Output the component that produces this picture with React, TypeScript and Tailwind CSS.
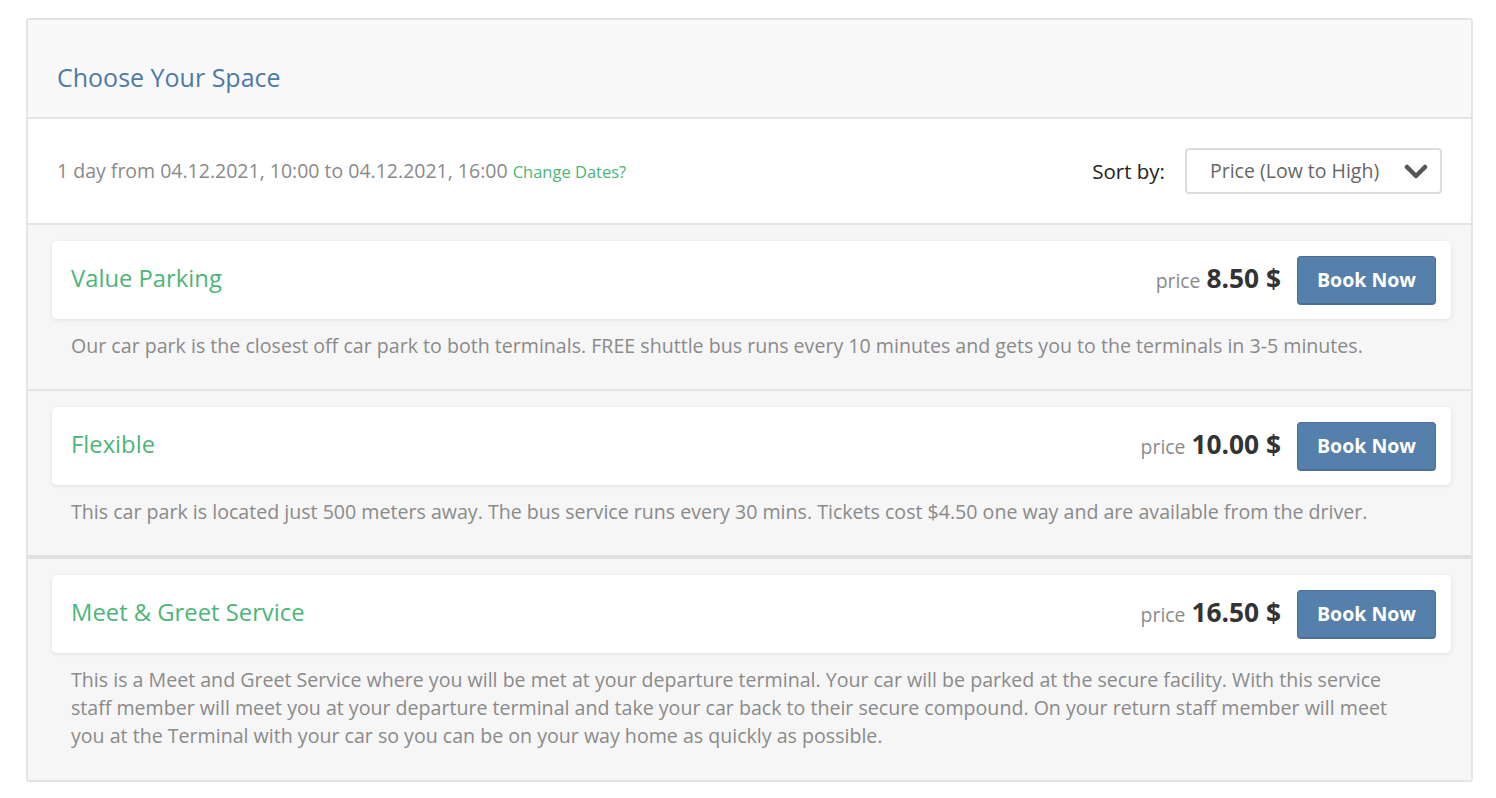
const items = [
  {
    title: 'Value Parking',
    price: '8.50 $',
    text: 'Our car park is the closest off car park to both terminals. FREE shuttle bus runs every 10 minutes and gets you to the terminals in 3-5 minutes.',
  },
  {
    title: 'Flexible',
    price: '10.00 $',
    text: 'This car park is located just 500 meters away. The bus service runs every 30 mins. Tickets cost $4.50 one way and are available from the driver.',
  },
  {
    title: 'Meet & Greet Service',
    price: '16.50 $',
    text: 'This is a Meet and Greet Service where you will be met at your departure terminal. Your car will be parked at the secure facility. With this service staff member will meet you at your departure terminal and take your car back to their secure compound. On your return staff member will meet you at the Terminal with your car so you can be on your way home as quickly as possible.',
  },
];

export default function App() {
  return (
    <div className="min-h-screen bg-white pt-[18px] pl-[26px] pr-[23px] font-['Open_Sans',sans-serif]">
      <div className="border-2 border-[#e4e4e4] rounded-[3px] overflow-hidden">

        {/* ── Header ───────────────────────────────────────────── */}
        <div className="bg-[#f9f9f9] border-b-2 border-[#e4e4e4] pl-[29px] pt-[39px] pb-[22px]">
          <h1 className="text-[25px] leading-[36px] text-[#4f79a7]">Choose Your Space</h1>
        </div>

        {/* ── Dates / sort row ─────────────────────────────────── */}
        <div className="bg-white border-b-2 border-[#e4e4e4] h-[106px] flex items-center justify-between pl-[29px] pr-[29px]">
          <p className="text-[19.5px] leading-[28px] text-[#8a8a8a]">
            1 day from 04.12.2021, 10:00 to 04.12.2021, 16:00{' '}
            <span className="text-[16.5px] text-[#4db578]">Change Dates?</span>
          </p>
          <div className="flex items-center gap-[20px]">
            <span className="text-[20.5px] text-[#222]">Sort by:</span>
            <div className="w-[257px] h-[46px] border-2 border-[#dcdcdc] rounded-[4px] flex items-center justify-between pl-[23px] pr-[12px]">
              <span className="text-[19.5px] text-[#666]">Price (Low to High)</span>
              <svg width="24" height="16" viewBox="0 0 24 16" className="mt-[1px]">
                <polyline points="3,3 12,12 21,3" fill="none" stroke="#555" strokeWidth="4.5" strokeLinecap="round" strokeLinejoin="round" />
              </svg>
            </div>
          </div>
        </div>

        {/* ── Items ────────────────────────────────────────────── */}
        {items.map((item, i) => (
          <div
            key={item.title}
            className={
              i === 0
                ? 'bg-[#f6f6f6] pl-[24px] pr-[20px] pt-[16px] pb-[29px] border-b-2 border-[#e4e4e4]'
                : i === 1
                ? 'bg-[#f6f6f6] pl-[24px] pr-[20px] pt-[16px] pb-[29px] border-b-[4px] border-[#e0e0e0]'
                : 'bg-[#f6f6f6] pl-[24px] pr-[20px] pt-[16px] pb-[30px]'
            }
          >
            <div className="bg-white rounded-[5px] h-[78px] flex items-center justify-between pl-[19px] pr-[15px] shadow-[0_1px_4px_rgba(0,0,0,0.09)]">
              <span className="text-[23.8px] leading-[32px] text-[#4db578] -mt-[4px]">{item.title}</span>
              <div className="flex items-center gap-[16px]">
                <span className="flex items-baseline gap-[6px] -mt-[2px]">
                  <span className="text-[19.4px] text-[#8a8a8a]">price</span>
                  <span className="text-[26.3px] font-bold text-[#333]">{item.price}</span>
                </span>
                <button className="w-[139px] h-[49px] rounded-[4px] bg-[#5580ab] border border-[#4a709a] border-b-2 text-white text-[19.5px] font-bold">
                  Book Now
                </button>
              </div>
            </div>
            <p className="mt-[13px] pl-[19px] pr-[40px] text-[19.6px] leading-[28px] text-[#8a8a8a]">{item.text}</p>
          </div>
        ))}
      </div>
    </div>
  );
}
